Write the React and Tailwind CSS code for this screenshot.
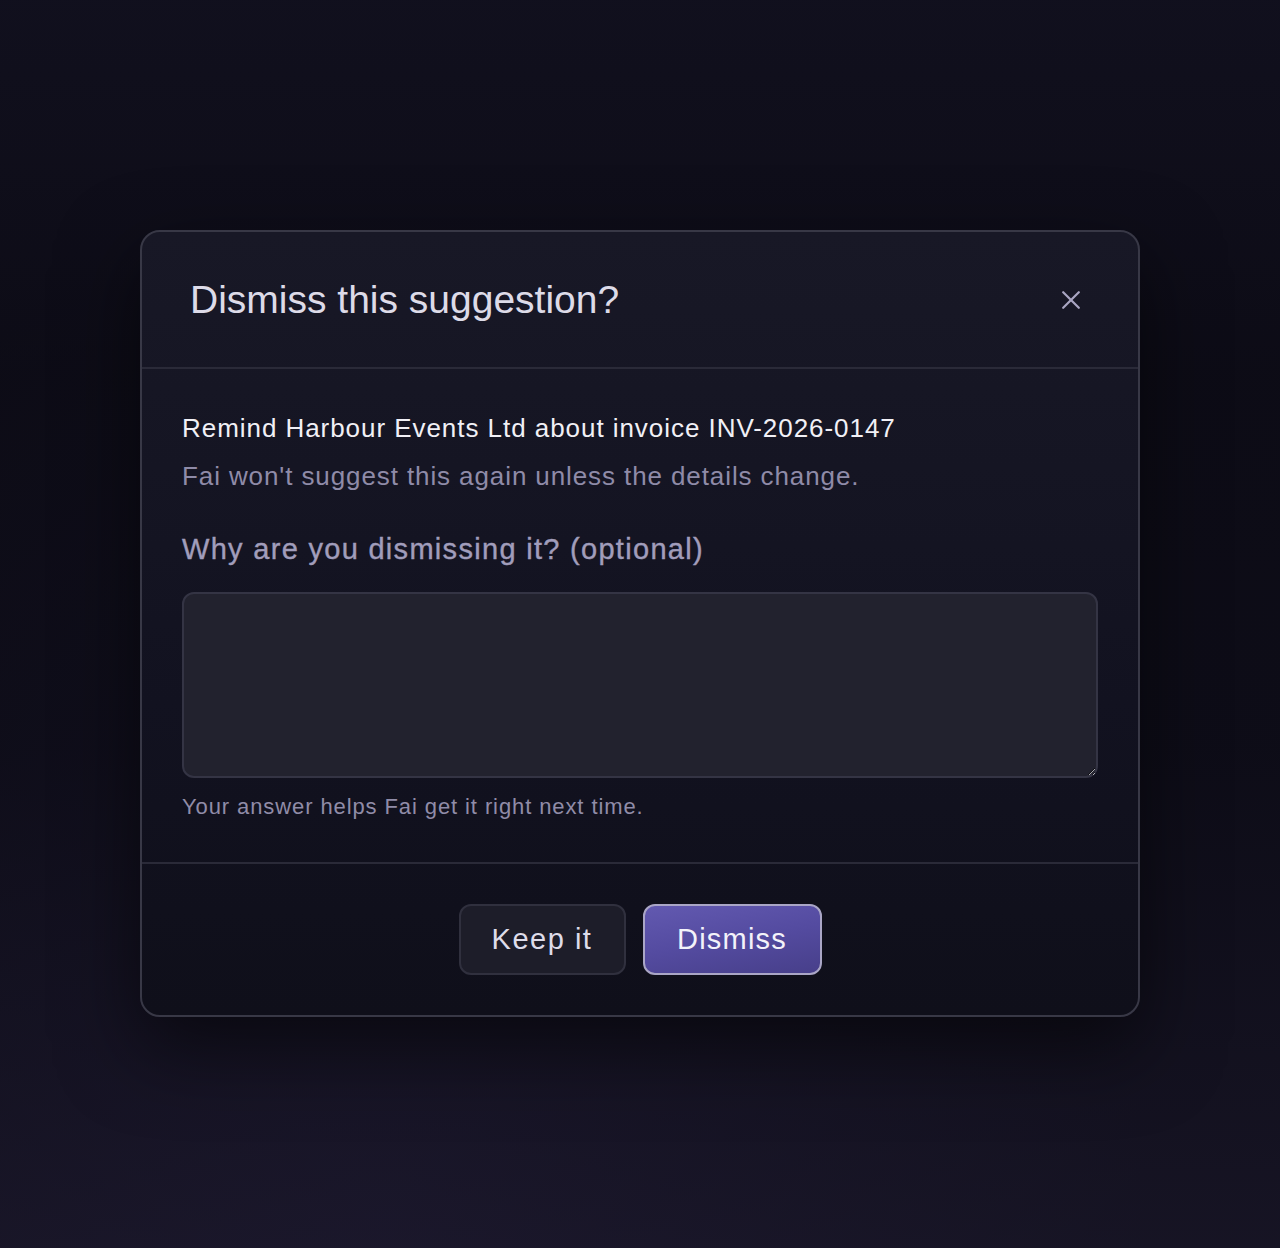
export default function App() {
  return (
    <div
      className="relative min-h-[1248px] w-full overflow-hidden bg-[#0e0d18]"
      style={{ fontFamily: '"Liberation Sans", Arial, sans-serif' }}
    >
      {/* soft backdrop glow */}
      <div className="pointer-events-none absolute inset-0 bg-[radial-gradient(ellipse_at_30%_100%,#1c1830_0%,transparent_60%)]" />
      <div className="pointer-events-none absolute inset-0 bg-[linear-gradient(180deg,#121120_0%,#0c0b15_30%,#0d0c17_60%,#1a1729_100%)] opacity-70" />

      <div className="relative flex justify-center pt-[230px]">
        <div className="w-[1000px] rounded-[20px] border-2 border-[#383846] bg-[linear-gradient(180deg,#181826_0%,#121220_60%,#0f0f1a_100%)] shadow-[0_30px_80px_rgba(0,0,0,0.55)]">
          {/* header */}
          <div className="flex h-[137px] items-center justify-between border-b-2 border-[#2a2a38] pl-[48px] pr-[58px]">
            <h2 className="text-[39px] leading-none text-[#dddbe8]">Dismiss this suggestion?</h2>
            <button className="flex h-[18px] w-[18px] items-center justify-center text-[#a9a5c2]">
              <svg width="18" height="18" viewBox="0 0 18 18" fill="none" stroke="currentColor" strokeWidth="2.2" strokeLinecap="round">
                <path d="M1.2 1.2 16.8 16.8M16.8 1.2 1.2 16.8" />
              </svg>
            </button>
          </div>

          {/* body */}
          <div className="border-b-2 border-[#2a2a38] px-[40px] pt-[43px] pb-[41px]">
            <p className="text-[26px] leading-[32px] tracking-[0.95px] text-[#f1f0f6]">
              Remind Harbour Events Ltd about invoice INV-2026-0147
            </p>
            <p className="mt-[16px] text-[26px] leading-[32px] tracking-[0.9px] text-[#8f8ba8]">
              Fai won't suggest this again unless the details change.
            </p>

            <label className="mt-[40px] block text-[29px] leading-[34px] tracking-[1.3px] text-[#a19dbb] [-webkit-text-stroke:0.4px_#a19dbb]">
              Why are you dismissing it? (optional)
            </label>
            <textarea className="mt-[26px] block h-[186px] w-full resize-y rounded-[12px] border-2 border-[#343444] bg-[#22222e] p-4 text-[22px] text-[#e8e6f0] outline-none" />
            <p className="mt-[15px] text-[22px] leading-[28px] tracking-[0.9px] text-[#908ca8]">
              Your answer helps Fai get it right next time.
            </p>
          </div>

          {/* footer */}
          <div className="flex justify-center gap-[17px] pt-[40px] pb-[40px]">
            <button className="h-[71px] w-[167px] rounded-[12px] border-2 border-[#30303e] bg-[#1d1d29] text-[29px] tracking-[1.5px] text-[#dedcea]">
              Keep it
            </button>
            <button className="h-[71px] w-[179px] rounded-[12px] border-2 border-[#aaa6c6] bg-[linear-gradient(170deg,#6259b0_0%,#544ba0_50%,#473f8a_100%)] text-[29px] tracking-[1.2px] text-[#f3f2fa]">
              Dismiss
            </button>
          </div>
        </div>
      </div>
    </div>
  );
}
